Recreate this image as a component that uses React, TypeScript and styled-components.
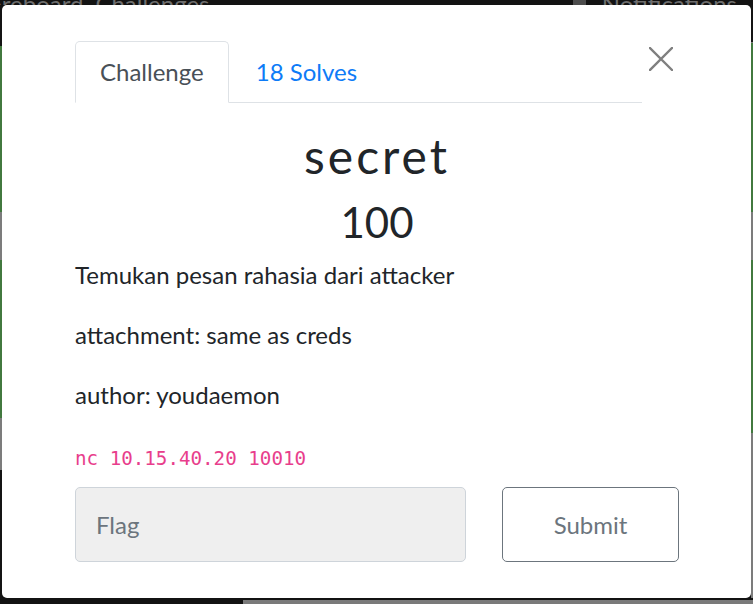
import React from "react";
import styled, { createGlobalStyle } from "styled-components";

const GlobalStyle = createGlobalStyle`
  html, body {
    margin: 0;
    padding: 0;
    background: #131313;
    overflow: hidden;
  }
  body {
    font-family: Lato, "Open Sans", sans-serif;
  }
  * { box-sizing: border-box; }
`;

const Page = styled.div`
  position: relative;
  width: 753px;
  height: 604px;
  display: flex;
  flex-direction: column;
  background: #131313;
  overflow: hidden;
`;

const NavBar = styled.nav`
  height: 5px;
  display: flex;
  align-items: flex-start;
  overflow: hidden;
  flex: 0 0 auto;
`;

const NavGroup = styled.div<{ $offset?: number; $end?: boolean }>`
  display: flex;
  align-items: flex-start;
  gap: 12px;
  margin-left: ${(p) => (p.$end ? "auto" : `${p.$offset ?? 0}px`)};
  padding-right: ${(p) => (p.$end ? "16px" : "0")};
`;

const NavLink = styled.span`
  font-size: 24px;
  line-height: 1;
  margin-top: -8px;
  color: #6e6e6e;
  white-space: nowrap;
`;

const NavIcon = styled.span`
  width: 13px;
  height: 14px;
  margin-top: -4px;
  margin-right: 4px;
  background: #4d4d4d;
  border-radius: 1px;
`;

const Board = styled.main`
  flex: 1 1 auto;
  display: flex;
  justify-content: space-between;
`;

const Strip = styled.div`
  width: 2px;
  display: flex;
  flex-direction: column;
`;

const Tile = styled.div<{ $tone: "dark" | "green" | "gray"; $h: number }>`
  height: ${(p) => p.$h}px;
  flex: 0 0 auto;
  background: ${(p) =>
    p.$tone === "green" ? "#42793f" : p.$tone === "gray" ? "#7c7c7c" : "#141414"};
`;

const Footer = styled.footer`
  height: 6px;
  flex: 0 0 auto;
  display: flex;
`;

const FooterPart = styled.div<{ $light?: boolean }>`
  flex: ${(p) => (p.$light ? "1 1 auto" : "0 0 243px")};
  background: ${(p) => (p.$light ? "#7a7a7a" : "#121212")};
`;

const Modal = styled.div`
  position: absolute;
  top: 5px;
  left: 2px;
  width: 749px;
  height: 593px;
  background: #ffffff;
  border-radius: 5px;
  padding: 36px 72px 0 73px;
  display: flex;
  flex-direction: column;
  color: #212529;
`;

const Header = styled.div`
  display: flex;
  align-items: flex-start;
`;

const Tabs = styled.ul`
  flex: 1 1 auto;
  display: flex;
  list-style: none;
  margin: 0;
  padding: 0;
  border-bottom: 1px solid #dee2e6;
`;

const Tab = styled.li<{ $active?: boolean }>`
  margin-bottom: -1px;
  padding: 12px 24px;
  font-size: 24px;
  line-height: 36px;
  border: 1px solid ${(p) => (p.$active ? "#dee2e6" : "transparent")};
  border-bottom-color: ${(p) => (p.$active ? "#ffffff" : "transparent")};
  border-radius: 5px 5px 0 0;
  background: ${(p) => (p.$active ? "#ffffff" : "transparent")};
  color: ${(p) => (p.$active ? "#495057" : "#0d7bf7")};
  cursor: pointer;
  & + & {
    padding-left: 26px;
  }
`;

const CloseButton = styled.button`
  flex: 0 0 auto;
  width: 24px;
  height: 24px;
  margin: 6px 6px 0 7px;
  padding: 0;
  border: none;
  background: transparent;
  display: flex;
  cursor: pointer;
`;

const Title = styled.h2`
  margin: 0 0 12px;
  padding-top: 24px;
  font-size: 48px;
  font-weight: 400;
  line-height: 1.2;
  letter-spacing: 3px;
  text-align: center;
`;

const Value = styled.h3`
  margin: 0 0 10px;
  font-size: 42px;
  font-weight: 400;
  line-height: 1.2;
  text-align: center;
`;

const Paragraph = styled.p<{ $last?: boolean }>`
  margin: 0 0 ${(p) => (p.$last ? "0" : "24px")};
  font-size: 24px;
  line-height: 36px;
`;

const Code = styled.code`
  font-family: "DejaVu Sans Mono", "Liberation Mono", monospace;
  font-size: 19.2px;
  color: #e83e8c;
  position: relative;
  top: 1px;
`;

const FlagForm = styled.form`
  display: grid;
  grid-template-columns: 391px 177px;
  column-gap: 36px;
  margin-top: 11px;
`;

const FlagInput = styled.input`
  height: 75px;
  padding: 0 20px;
  border: 1px solid #ced4da;
  border-radius: 5px;
  background: #efefef;
  font-family: Lato, "Open Sans", sans-serif;
  font-size: 24px;
  color: #495057;
  outline: none;
  &::placeholder {
    color: #6c757d;
  }
`;

const SubmitButton = styled.button`
  height: 75px;
  border: 1px solid #6c757d;
  border-radius: 5px;
  background: #ffffff;
  font-family: Lato, "Open Sans", sans-serif;
  font-size: 24px;
  color: #6c757d;
  cursor: pointer;
`;

const leftTiles: Array<["dark" | "green" | "gray", number]> = [
  ["dark", 41],
  ["green", 166],
  ["gray", 48],
  ["green", 158],
  ["gray", 52],
  ["dark", 130],
];

const rightTiles: Array<["dark" | "green" | "gray", number]> = [
  ["dark", 37],
  ["gray", 1],
  ["green", 169],
  ["gray", 48],
  ["green", 173],
  ["gray", 165],
];

export default function App() {
  return (
    <>
      <GlobalStyle />
      <Page>
        <NavBar>
          <NavGroup $offset={-36}>
            <NavLink>Scoreboard</NavLink>
            <NavLink>Challenges</NavLink>
          </NavGroup>
          <NavGroup $end>
            <NavIcon />
            <NavLink>Notifications</NavLink>
          </NavGroup>
        </NavBar>
        <Board>
          <Strip>
            {leftTiles.map(([tone, h], i) => (
              <Tile key={i} $tone={tone} $h={h} />
            ))}
          </Strip>
          <Strip>
            {rightTiles.map(([tone, h], i) => (
              <Tile key={i} $tone={tone} $h={h} />
            ))}
          </Strip>
        </Board>
        <Footer>
          <FooterPart />
          <FooterPart $light />
        </Footer>

        <Modal role="dialog">
          <Header>
            <Tabs>
              <Tab $active>Challenge</Tab>
              <Tab>18 Solves</Tab>
            </Tabs>
            <CloseButton aria-label="Close">
              <svg width="24" height="24" viewBox="0 0 24 24">
                <path
                  d="M1 1 L23 23 M23 1 L1 23"
                  stroke="#7f7f7f"
                  strokeWidth="2.4"
                  strokeLinecap="square"
                  fill="none"
                />
              </svg>
            </CloseButton>
          </Header>
          <Title>secret</Title>
          <Value>100</Value>
          <Paragraph>Temukan pesan rahasia dari attacker</Paragraph>
          <Paragraph>attachment: same as creds</Paragraph>
          <Paragraph>author: youdaemon</Paragraph>
          <Paragraph $last>
            <Code>nc 10.15.40.20 10010</Code>
          </Paragraph>
          <FlagForm onSubmit={(e) => e.preventDefault()}>
            <FlagInput type="text" placeholder="Flag" />
            <SubmitButton type="submit">Submit</SubmitButton>
          </FlagForm>
        </Modal>
      </Page>
    </>
  );
}
